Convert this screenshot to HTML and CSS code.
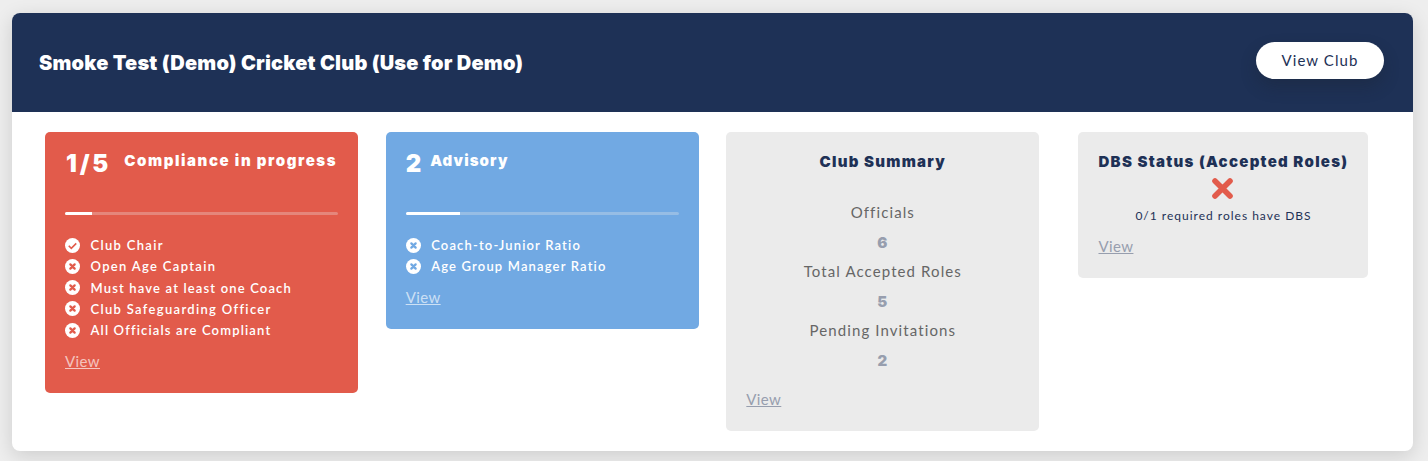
FILE: index.html
```html
<!DOCTYPE html>
<html lang="en">
<head>
  <meta charset="utf-8">
  <title>Club Compliance</title>
  <link rel="stylesheet" href="styles.css">
</head>
<body>
  <!-- Shared icons -->
  <svg class="icon-defs" width="0" height="0">
    <symbol id="icon-check" viewBox="0 0 16 16">
      <circle cx="8" cy="8" r="8" fill="#fff"/>
      <path d="M4 8.3l2.7 2.7 5.3-5.3" fill="none" stroke="currentColor" stroke-width="1.7"/>
    </symbol>
    <symbol id="icon-cross" viewBox="0 0 16 16">
      <circle cx="8" cy="8" r="8" fill="#fff"/>
      <path d="M5.7 5.7l4.6 4.6M10.3 5.7l-4.6 4.6" fill="none" stroke="currentColor" stroke-width="2.4" stroke-linecap="round"/>
    </symbol>
  </svg>

  <div class="club">
    <div class="club-header">
      <h1>Smoke Test (Demo) Cricket Club (Use for Demo)</h1>
      <a class="btn">View Club</a>
    </div>

    <div class="club-body">
      <!-- Compliance -->
      <div class="panel panel-red">
        <div class="panel-head">
          <span class="count">1/5</span>
          <h2>Compliance in progress</h2>
        </div>
        <div class="progress"><div class="progress-bar" style="width: 10%"></div></div>
        <ul class="checks">
          <li><svg><use href="#icon-check"/></svg><span class="wide">Club Chair</span></li>
          <li><svg><use href="#icon-cross"/></svg><span class="wide">Open Age Captain</span></li>
          <li><svg><use href="#icon-cross"/></svg><span>Must have at least one Coach</span></li>
          <li><svg><use href="#icon-cross"/></svg><span class="wide">Club Safeguarding Officer</span></li>
          <li><svg><use href="#icon-cross"/></svg><span>All Officials are Compliant</span></li>
        </ul>
        <a class="view">View</a>
      </div>

      <!-- Advisory -->
      <div class="panel panel-blue">
        <div class="panel-head">
          <span class="count">2</span>
          <h2>Advisory</h2>
        </div>
        <div class="progress"><div class="progress-bar" style="width: 20%"></div></div>
        <ul class="checks">
          <li><svg><use href="#icon-cross"/></svg><span>Coach-to-Junior Ratio</span></li>
          <li><svg><use href="#icon-cross"/></svg><span>Age Group Manager Ratio</span></li>
        </ul>
        <a class="view">View</a>
      </div>

      <!-- Summary -->
      <div class="panel panel-grey">
        <h2>Club Summary</h2>
        <dl class="summary">
          <dt>Officials</dt>
          <dd>6</dd>
          <dt>Total Accepted Roles</dt>
          <dd>5</dd>
          <dt>Pending Invitations</dt>
          <dd>2</dd>
        </dl>
        <a class="view">View</a>
      </div>

      <!-- DBS -->
      <div class="panel panel-grey panel-dbs">
        <h2>DBS Status (Accepted Roles)</h2>
        <svg class="dbs-icon" viewBox="0 0 22 21"><path d="M3 3l15 15M18 3L3 18"/></svg>
        <p class="dbs-text">0/1 required roles have DBS</p>
        <a class="view">View</a>
      </div>
    </div>
  </div>
</body>
</html>
```
FILE: styles.css
```css
* {
  box-sizing: border-box;
}
body {
  font-family: Lato, "Open Sans", sans-serif;
  margin: 0;
  padding: 13px 15px 10px 12px;
  background-color: #eee;
  overflow: hidden;
}
h1, h2, p, ul, dl, dd {
  margin: 0;
  padding: 0;
}
h1, h2, .count, .summary dd {
  font-family: Inter, Lato, sans-serif;
  font-weight: 900;
}
.icon-defs {
  position: absolute;
}
.club {
  height: 438px;
  background-color: #fff;
  border-radius: 8px;
  box-shadow: 0 5px 20px rgba(0, 0, 0, 0.14);
}
.club-header {
  display: flex;
  justify-content: space-between;
  align-items: center;
  height: 99px;
  padding: 0 29px 2px 27px;
  background-color: #1e3156;
  border-radius: 8px 8px 0 0;
}
h1 {
  padding-top: 2px;
  color: #fff;
  font-size: 20px;
  line-height: 24px;
  letter-spacing: 0.2px;
  white-space: nowrap;
}
.btn {
  width: 128px;
  height: 37px;
  margin-bottom: 3px;
  border-radius: 19px;
  background-color: #fff;
  color: #1e3156;
  font-size: 15px;
  line-height: 36px;
  letter-spacing: 1.1px;
  text-align: center;
  box-shadow: 0 8px 16px rgba(26, 32, 44, 0.3);
}
.club-body {
  display: grid;
  grid-template-columns: repeat(4, 313px);
  justify-content: space-between;
  align-items: start;
  padding: 20px 33px;
}

/* Panels */
.panel {
  padding: 20px;
  border-radius: 5px;
}
.panel-red {
  background-color: #e25b4b;
  color: #e25b4b;
}
.panel-blue {
  background-color: #71a9e3;
  color: #71a9e3;
}
.panel-grey {
  background-color: #ebebeb;
  color: #1e3156;
  text-align: center;
}
.panel-head {
  display: flex;
  height: 60px;
  color: #fff;
}
h2 {
  font-size: 15px;
  line-height: 18px;
  letter-spacing: 1.28px;
  white-space: nowrap;
}
.panel-red h2 {
  letter-spacing: 1.6px;
}
.panel-blue h2 {
  letter-spacing: 1.1px;
}
.panel-grey h2 {
  padding-top: 1px;
  margin-bottom: -1px;
}
.count {
  margin-right: 9px;
  font-size: 24px;
  line-height: 23px;
}
.panel-red .count {
  margin: 0 13px 0 1px;
  letter-spacing: 2.8px;
}
.progress {
  height: 3px;
  border-radius: 2px;
  background-color: rgba(235, 235, 235, 0.3);
  overflow: hidden;
}
.progress-bar {
  height: 3px;
  background-color: #fff;
}
.checks {
  list-style: none;
  margin: 19.5px 0 10px;
}
.checks li {
  display: flex;
  align-items: center;
  height: 21.25px;
}
.checks svg {
  width: 15px;
  height: 15px;
  margin-right: 10.5px;
}
.checks span {
  color: #fff;
  font-size: 13px;
  font-weight: 600;
  letter-spacing: 1.16px;
  white-space: nowrap;
}
.checks .wide {
  letter-spacing: 1.32px;
}
.view {
  display: block;
  width: max-content;
  padding-bottom: 2px;
  font-size: 15px;
  line-height: 20px;
  letter-spacing: 0.4px;
  text-decoration: underline;
  text-underline-offset: 1px;
  color: rgba(255, 255, 255, 0.65);
}
.panel-grey .view {
  color: #979eae;
}
.summary {
  margin: 28px 0 14px;
  font-size: 15px;
  line-height: 29.5px;
  letter-spacing: 1.1px;
}
.summary dt {
  color: #666;
}
.summary dd {
  color: #979eae;
}
.panel-dbs {
  width: 290px;
  justify-self: center;
}
.dbs-icon {
  display: block;
  width: 22px;
  height: 21px;
  margin: 8px auto 0;
  fill: none;
  stroke: #e25b4b;
  stroke-width: 5.6px;
  stroke-linecap: round;
}
.dbs-text {
  margin: 8px 0 11px;
  font-size: 12px;
  line-height: 18px;
  letter-spacing: 1px;
}
```
